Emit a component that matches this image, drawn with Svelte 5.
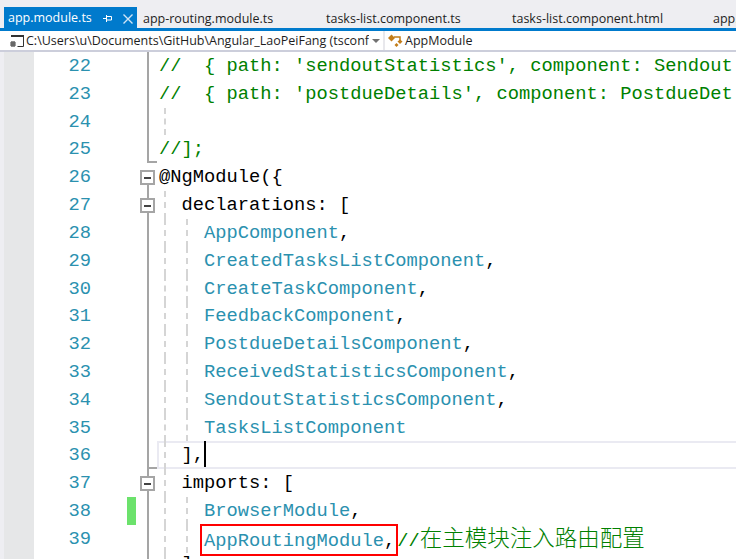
<script>
	// guides: 1 = first indent level, 2 = second indent level
	const lines = [
		{ n: 22, parts: [['c', "//  { path: 'sendoutStatistics', component: Sendout"]], fold: 'line' },
		{ n: 23, parts: [['c', "//  { path: 'postdueDetails', component: PostdueDet"]], fold: 'line' },
		{ n: 24, parts: [], fold: 'line', guides: [1] },
		{ n: 25, parts: [['c', '//];']], fold: 'end' },
		{ n: 26, parts: [['k', '@NgModule({']], fold: 'box-top' },
		{ n: 27, parts: [['k', '  declarations: [']], fold: 'box', guides: [1] },
		{ n: 28, parts: [['t', '    AppComponent'], ['k', ',']], fold: 'line', guides: [1, 2] },
		{ n: 29, parts: [['t', '    CreatedTasksListComponent'], ['k', ',']], fold: 'line', guides: [1, 2] },
		{ n: 30, parts: [['t', '    CreateTaskComponent'], ['k', ',']], fold: 'line', guides: [1, 2] },
		{ n: 31, parts: [['t', '    FeedbackComponent'], ['k', ',']], fold: 'line', guides: [1, 2] },
		{ n: 32, parts: [['t', '    PostdueDetailsComponent'], ['k', ',']], fold: 'line', guides: [1, 2] },
		{ n: 33, parts: [['t', '    ReceivedStatisticsComponent'], ['k', ',']], fold: 'line', guides: [1, 2] },
		{ n: 34, parts: [['t', '    SendoutStatisticsComponent'], ['k', ',']], fold: 'line', guides: [1, 2] },
		{ n: 35, parts: [['t', '    TasksListComponent']], fold: 'line', guides: [1, 2] },
		{ n: 36, parts: [['k', '  ],']], fold: 'end', guides: [1], current: true },
		{ n: 37, parts: [['k', '  imports: [']], fold: 'box', guides: [1] },
		{ n: 38, parts: [['t', '    BrowserModule'], ['k', ',']], fold: 'line', guides: [1, 2], changed: true },
		{ n: 39, parts: [], fold: 'line', guides: [1, 2], routing: true },
		{ n: 40, parts: [['k', '  ]']], fold: 'line', guides: [1], last: true }
	];
	const tabs = [
		{ name: 'app-routing.module.ts', width: 183 },
		{ name: 'tasks-list.component.ts', width: 186 },
		{ name: 'tasks-list.component.html', width: 201 },
		{ name: 'app.component.ts', width: 100 }
	];
</script>

<div class="window">
	<div class="tabstrip">
		<div class="tab active">
			<span>app.module.ts</span>
			<svg class="pin" width="11" height="9" viewBox="0 0 11 9"><path d="M0 4.500h3M3.500 1v7M3.500 2.500h5v3.500h-5" fill="none" stroke="#fff"/></svg>
			<svg class="close" width="10" height="10" viewBox="0 0 10 10"><path d="M.5.5l9 9M9.500.5l-9 9" stroke="#d0e4f5" stroke-width="1.4"/></svg>
		</div>
		{#each tabs as t}
			<div class="tab" style="width: {t.width}px">{t.name}</div>
		{/each}
	</div>
	<div class="navbar">
		<div class="project">
			<svg width="16" height="14" viewBox="0 0 16 14">
				<path d="M2.500 1.500h12v11h-6" fill="none" stroke="#333"/><path d="M2 1h13v2H2z" fill="#333"/>
				<path d="M1 9h6M1 11h6M3 7v6M5 7v6" stroke="#444" stroke-width="1.200"/>
			</svg>
			<span class="path">C:\Users\u\Documents\GitHub\Angular_LaoPeiFang (tsconf</span>
			<span class="caret"></span>
		</div>
		<div class="member">
			<svg width="16" height="14" viewBox="0 0 16 14">
				<path d="M0 4l3.500-3.500L7 4 3.500 7.500z" fill="#c27d1a"/><path d="M6 3h6v5" fill="none" stroke="#c27d1a" stroke-width="1.500"/>
				<path d="M9.500 7.500l2.500-2 2.500 2-2.500 2.500z" fill="#c27d1a"/><path d="M6.500 11l2-2 2 2-2 2z" fill="#c27d1a"/>
			</svg>
			<span>AppModule</span>
		</div>
	</div>
	<div class="editor">
		{#each lines as l}
			<div class="row" class:last={l.last}>
				<div class="glyphs"></div>
				<div class="num">{l.n}</div>
				<div class="change"><i class:on={l.changed}></i></div>
				<div class="fold {l.fold}">
					{#if l.fold.startsWith('box')}<b></b>{/if}
				</div>
				<div class="code" class:current={l.current}>
					{#each l.guides ?? [] as g}
						<i class="guide" class:g2={g === 2}></i>
					{/each}
					<div class="text">{#if l.routing}<span class="mark"><span class="t">AppRoutingModule</span><span class="k">,</span></span><span class="c">//<span class="cjk">在主模块注入路由配置</span></span>{:else}{#each l.parts as p}<span class={p[0]}>{p[1]}</span>{/each}{/if}{#if l.current}<i class="cursor"></i>{/if}</div>
				</div>
			</div>
		{/each}
	</div>
</div>

<style>
	:global(body) {
		margin: 0;
		overflow: hidden;
		background: #fff;
	}

	.window {
		width: 736px;
		height: 559px;
		overflow: hidden;
		display: flex;
		flex-direction: column;
		font-family: "Open Sans", "Noto Sans", sans-serif;
	}

	.tabstrip {
		flex: none;
		height: 28px;
		padding-left: 4px;
		display: flex;
		align-items: flex-end;
		background: #eeeef2;
		border-bottom: 3px solid #007acc;
		white-space: nowrap;
		overflow: hidden;
	}

	.tab {
		flex: none;
		height: 21px;
		line-height: 24px;
		font-size: 12.5px;
		color: #1e1e1e;
		padding-left: 6px;
		box-sizing: border-box;
	}

	.tab.active {
		width: 133px;
		padding-left: 4px;
		background: #007acc;
		color: #fff;
		display: flex;
		align-items: center;
	}

	.pin {
		margin-left: 11px;
		margin-top: 2px;
	}

	.close {
		margin-left: 9px;
		margin-top: 2px;
	}

	.navbar {
		flex: none;
		height: 19px;
		padding-left: 9px;
		display: flex;
		background: #fff;
		border-bottom: 2px solid #cccedb;
		font-size: 12.5px;
		color: #1e1e1e;
		line-height: 20px;
		white-space: nowrap;
		overflow: hidden;
	}

	.project {
		width: 376px;
		flex: none;
		display: flex;
		align-items: center;
		gap: 1px;
		overflow: hidden;
		border-right: 2px solid #e8e8ec;
		box-sizing: border-box;
	}

	.project svg {
		flex: none;
	}

	.path {
		width: 343px;
		flex: none;
		overflow: hidden;
	}

	.caret {
		flex: none;
		margin-left: 2px;
		border: 4px solid transparent;
		border-top: 4px solid #717171;
		margin-top: 5px;
	}

	.member {
		display: flex;
		align-items: center;
		gap: 1px;
		padding-left: 3px;
	}

	.editor {
		flex: 1;
		min-height: 0;
		overflow: hidden;
		font-family: "Liberation Mono", "Noto Sans CJK SC", monospace;
		font-size: 18.75px;
	}

	.row {
		display: flex;
		height: 27.82px;
		line-height: 29.82px;
		box-shadow: inset 4px 0 #eeeef2;
	}

	/* only the top of this line is in view */
	.row.last {
		line-height: 22px;
	}

	.row.last .num {
		visibility: hidden;
	}

	.glyphs {
		width: 30px;
		flex: none;
		margin-left: 4px;
		background: #e6e7e8;
	}

	.num {
		width: 57px;
		flex: none;
		text-align: right;
		color: #2b91af;
	}

	.change {
		width: 36px;
		flex: none;
	}

	.change i {
		display: block;
		width: 9px;
		height: 100%;
		margin-left: 36px;
	}

	.change i.on {
		background: #6ce26c;
	}

	.fold {
		width: 32px;
		flex: none;
		margin-left: -2px;
		position: relative;
	}

	.fold::before {
		content: "";
		position: absolute;
		left: 22px;
		top: 0;
		bottom: 0;
		width: 2px;
		background: #a5a5a5;
	}

	.fold.end::after {
		content: "";
		position: absolute;
		left: 22px;
		bottom: 0;
		width: 10px;
		height: 2px;
		background: #a5a5a5;
	}

	.fold b {
		position: absolute;
		z-index: 1;
		left: 15px;
		top: 7px;
		width: 11px;
		height: 11px;
		border: 2px solid #a5a5a5;
		background: #fff;
	}

	.fold b::after {
		content: "";
		position: absolute;
		left: 2px;
		right: 2px;
		top: 4.500px;
		height: 2px;
		background: #444;
	}

	.fold.box-top::before {
		top: 14px;
	}

	.code {
		flex: 1;
		min-width: 0;
		position: relative;
	}

	.text {
		padding-left: 2px;
		white-space: pre;
	}

	.code.current {
		margin-right: -4px;
		box-shadow: inset 0 0 0 2px #eaeaf2;
	}

	.guide {
		position: absolute;
		left: 7px;
		top: 0;
		bottom: 0;
		border-left: 2px dashed #d5d5d5;
	}

	.guide.g2 {
		left: 29px;
	}

	.cursor {
		display: inline-block;
		width: 2px;
		height: 26px;
		vertical-align: top;
		background: #000;
	}

	.k {
		color: #000;
	}

	.t {
		color: #2b91af;
	}

	.c {
		color: #008000;
	}

	.cjk {
		font-family: "Noto Sans CJK SC", sans-serif;
		font-size: 22.5px;
		font-weight: 300;
		line-height: 1;
	}

	.mark {
		display: inline-block;
		position: relative;
		margin-left: 45px;
		margin-right: 2px;
	}

	/* red annotation box drawn over the line */
	.mark::after {
		content: "";
		position: absolute;
		left: -4px;
		right: -3px;
		top: -3px;
		height: 32px;
		box-sizing: border-box;
		border: 2px solid #f00;
	}
</style>
